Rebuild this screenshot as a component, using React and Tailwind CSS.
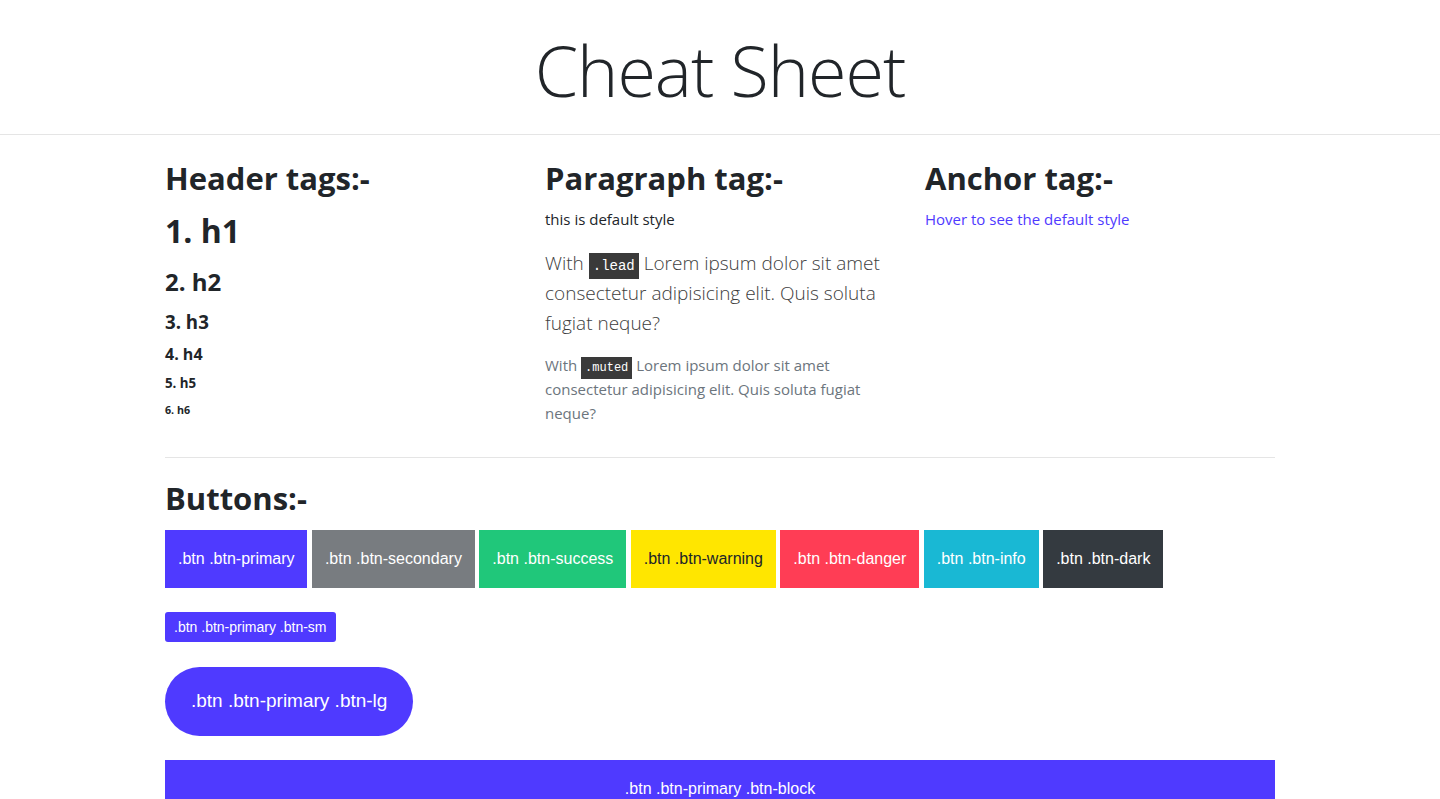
import React from 'react';

const headings = [
  { label: '1. h1', cls: 'text-[32px] mt-[14px] mb-[16px]' },
  { label: '2. h2', cls: 'text-[24px] mb-[13px]' },
  { label: '3. h3', cls: 'text-[18.7px] mb-[11px]' },
  { label: '4. h4', cls: 'text-[16px] mb-[11px]' },
  { label: '5. h5', cls: 'text-[13.3px] mb-[12px]' },
  { label: '6. h6', cls: 'text-[10.7px]' }
];

const buttons = [
  { label: '.btn .btn-primary', cls: 'bg-[#4f3aff] text-white' },
  { label: '.btn .btn-secondary', cls: 'bg-[#787c80] text-white' },
  { label: '.btn .btn-success', cls: 'bg-[#20c77a] text-white' },
  { label: '.btn .btn-warning', cls: 'bg-[#ffe600] text-[#212529]' },
  { label: '.btn .btn-danger', cls: 'bg-[#ff3d55] text-white' },
  { label: '.btn .btn-info', cls: 'bg-[#19b8d4] text-white' },
  { label: '.btn .btn-dark', cls: 'bg-[#343a40] text-white' }
];

const Code = ({ children, size }) => (
  <code className={`bg-[#3a3a3a] text-white leading-none font-['Liberation_Mono',monospace] ${size}`}>
    {children}
  </code>
);

export default function App() {
  return (
    <div className="min-h-screen bg-white text-[#212529] font-['Open_Sans','Noto_Sans',sans-serif]">
      <header className="border-b border-[#e5e5e5] h-[135px] flex items-center justify-center">
        <h1 className="text-[70px] font-light leading-none text-[#212529] tracking-[-1px] mt-[6px]">Cheat Sheet</h1>
      </header>

      <main className="max-w-[1140px] mx-auto px-[15px]">
        <div className="grid grid-cols-3 -mx-[15px] pt-[24px] pb-[32px]">
          <section className="px-[15px]">
            <h2 className="text-[31px] font-bold leading-[38px]">Header tags:-</h2>
            {headings.map((h) => (
              <div key={h.label} className={`font-bold leading-tight ${h.cls}`}>{h.label}</div>
            ))}
          </section>

          <section className="px-[15px]">
            <h2 className="text-[31px] font-bold leading-[38px]">Paragraph tag:-</h2>
            <p className="text-[15px] mt-[10px] leading-6">this is default style</p>
            <p className="text-[19px] font-light leading-[30px] mt-[17px] text-[#3d3d3d] pr-[8px]">
              With <Code size="text-[14px] px-[4px] py-[5px]">.lead</Code> Lorem ipsum dolor sit amet consectetur adipisicing elit. Quis soluta fugiat neque?
            </p>
            <p className="text-[15px] leading-[24px] mt-[15px] text-[#6c757d] pr-[8px]">
              With <Code size="text-[12px] px-[4px] py-[4px]">.muted</Code> Lorem ipsum dolor sit amet consectetur adipisicing elit. Quis soluta fugiat neque?
            </p>
          </section>

          <section className="px-[15px]">
            <h2 className="text-[31px] font-bold leading-[38px]">Anchor tag:-</h2>
            <a href="#" className="block text-[15px] mt-[10px] leading-6 text-[#4f3aff] hover:underline">
              Hover to see the default style
            </a>
          </section>
        </div>

        <hr className="border-t border-[#e5e5e5]" />

        <h2 className="text-[31px] font-bold leading-[38px] mt-[21px]">Buttons:-</h2>
        <div className="flex gap-[4.45px] mt-[13px] font-['Liberation_Sans',Arial,sans-serif]">
          {buttons.map((b) => (
            <button key={b.label} className={`h-[58px] px-[13px] text-[16px] ${b.cls}`}>{b.label}</button>
          ))}
        </div>

        <div className="mt-[24px] font-['Liberation_Sans',Arial,sans-serif]">
          <button className="h-[30px] px-[9px] text-[14px] rounded-[3px] bg-[#4f3aff] text-white">.btn .btn-primary .btn-sm</button>
        </div>

        <div className="mt-[25px] font-['Liberation_Sans',Arial,sans-serif]">
          <button className="h-[69px] px-[26px] text-[19px] rounded-full bg-[#4f3aff] text-white">.btn .btn-primary .btn-lg</button>
        </div>

        <button className="mt-[24px] w-full h-[58px] text-[16px] bg-[#4f3aff] text-white font-['Liberation_Sans',Arial,sans-serif]">
          .btn .btn-primary .btn-block
        </button>
      </main>
    </div>
  );
}
